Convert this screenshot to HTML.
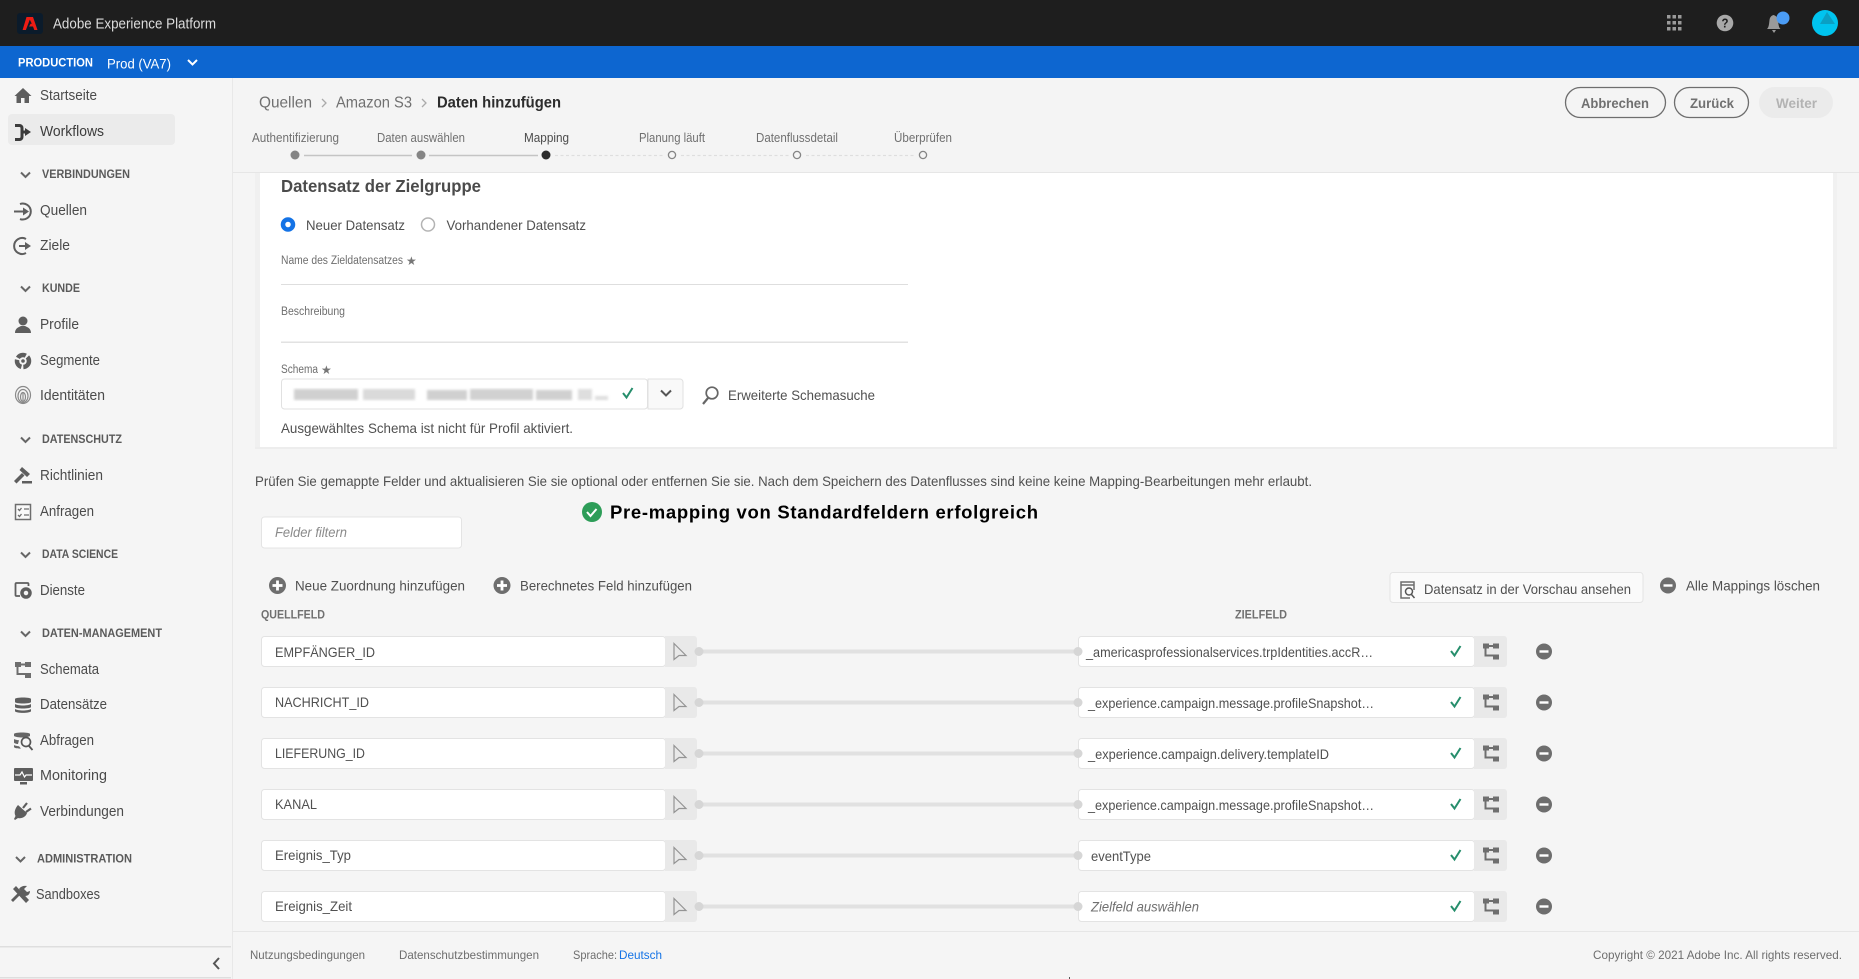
<!DOCTYPE html>
<html lang="de"><head><meta charset="utf-8"><title>Adobe Experience Platform</title>
<style>
html,body{margin:0;padding:0;width:1859px;height:979px;overflow:hidden;background:#f5f5f5}
svg{display:block;filter:blur(.3px)}
text{font-family:"Liberation Sans",sans-serif;dominant-baseline:central;fill:#505050;font-size:14px}
.n{font-size:14.5px;fill:#4b4b4b}
.h{font-size:11.5px;font-weight:bold;fill:#5a5a5a}
.s{font-size:12.5px;fill:#707070}
.l{font-size:11.5px;fill:#6e6e6e}
.f{font-size:12px;fill:#6e6e6e}
.r{font-size:14px;fill:#505050}
.i{fill:#5e5e5e}
.st{fill:none;stroke:#5e5e5e;stroke-width:2}
.chev{fill:none;stroke:#666;stroke-width:2}
</style></head><body>
<svg width="1859" height="979" viewBox="0 0 1859 979" xmlns="http://www.w3.org/2000/svg">
<defs>
<filter id="bl"><feGaussianBlur stdDeviation="1.3"/></filter>
<g id="minus"><ellipse cx="0" cy="0" rx="8" ry="8" fill="#6e6e6e"/><rect x="-4.5" y="-1.2" width="9" height="2.4" fill="#fff"/></g>
<g id="plus"><circle r="8.5" fill="#6e6e6e"/><rect x="-5" y="-1.4" width="10" height="2.8" fill="#fff"/><rect x="-1.4" y="-5" width="2.8" height="10" fill="#fff"/></g>
<g id="tree" fill="#6e6e6e"><rect x="-8" y="-8" width="6" height="5"/><rect x="2" y="-8" width="6" height="5"/><rect x="2" y="3" width="6" height="5"/><path d="M-5.5-3v7H2M-2-5.5h4" fill="none" stroke="#6e6e6e" stroke-width="2"/></g>
<g id="arrow"><path d="M-6-8L6 4-1 4-6 8z" fill="none" stroke="#949494" stroke-width="1.200"/></g>
<path id="chk" d="M-5 0l3.5 4.5L4.5-5" fill="none" stroke="#268e6c" stroke-width="2"/>
<g id="src">
<rect x=".5" y=".5" width="404" height="30" rx="3" fill="#fff" stroke="#e3e3e3"/>
<path d="M404 0h29a3 3 0 0 1 3 3v25a3 3 0 0 1-3 3h-29z" fill="#e9e9e9"/>
<use href="#arrow" x="419" y="15.5"/>
<rect x="437" y="13.5" width="381" height="4" fill="#e1e1e1"/>
<circle cx="438" cy="15.5" r="4.5" fill="#d6d6d6"/>
<rect x="817.500" y=".5" width="396" height="30" rx="3" fill="#fff" stroke="#e3e3e3"/>
<path d="M1213 0h30a3 3 0 0 1 3 3v25a3 3 0 0 1-3 3h-30z" fill="#e9e9e9"/>
<circle cx="817" cy="15.5" r="4.5" fill="#d6d6d6"/>
<use href="#tree" x="1230" y="15.5"/>
<use href="#chk" x="1195" y="15"/>
<use href="#minus" x="1283" y="15.500"/>
</g>
</defs>

<!-- top bars -->
<rect width="1859" height="46" fill="#1e1e1e"/>
<rect y="46" width="1859" height="32" fill="#0d66d0"/>
<rect x="17" y="13" width="26" height="21" rx="3" fill="#0b1b2b"/>
<path d="M26.500 17h6.500L37.500 30H34.300L33 26.500H29L30.600 23.700H31.800L29.800 19.600 25.900 30H22.600z" fill="#ee1c14"/>
<text x="53" y="24.500" textLength="163" lengthAdjust="spacingAndGlyphs" style="font-size:14.500px;fill:#dcdcdc">Adobe Experience Platform</text>
<text x="18" y="63.500" textLength="75" lengthAdjust="spacingAndGlyphs" style="font-size:11.500px;font-weight:bold;fill:#fff">PRODUCTION</text>
<text x="107" y="63.500" textLength="64" lengthAdjust="spacingAndGlyphs" style="font-size:14px;fill:#fff">Prod (VA7)</text>
<path d="M188 60l4.500 4.500 4.500-4.500" fill="none" stroke="#fff" stroke-width="2"/>
<g fill="#9a9a9a"><rect x="1667" y="15" width="3.500" height="3.500"/><rect x="1672.500" y="15" width="3.500" height="3.500"/><rect x="1678" y="15" width="3.500" height="3.500"/><rect x="1667" y="21" width="3.500" height="3.500"/><rect x="1672.500" y="21" width="3.500" height="3.500"/><rect x="1678" y="21" width="3.500" height="3.500"/><rect x="1667" y="27" width="3.500" height="3.500"/><rect x="1672.500" y="27" width="3.500" height="3.500"/><rect x="1678" y="27" width="3.500" height="3.500"/></g>
<ellipse cx="1725" cy="23" rx="8.300" ry="8.300" fill="#a8a8a8"/><text x="1721.500" y="23" textLength="7" lengthAdjust="spacingAndGlyphs" style="font-size:13px;font-weight:bold;fill:#1e1e1e">?</text>
<path d="M1767 29c2-2 2-5 2.500-9 .4-3 2-4.500 4-5 2 .5 4 2 4.500 5 .5 4 .5 7 2.500 9zM1772 30h4l-2 3z" fill="#9a9a9a"/>
<circle cx="1783" cy="18" r="6.500" fill="#4b9cf5"/>
<circle cx="1825" cy="23" r="13" fill="#00c4ef"/><path d="M1827 12l8 12h-15z" fill="#0aa0c4"/>

<!-- sidebar -->
<rect x="232" y="78" width="1" height="901" fill="#e8e8e8"/>
<rect x="8" y="114" width="167" height="31" rx="4" fill="#ebebeb"/>
<rect x="0" y="946" width="231" height="1.500" fill="#dedede"/><rect x="0" y="977" width="231" height="1.500" fill="#dedede"/>
<path d="M219 958l-5 5.500 5 5.500" fill="none" stroke="#555" stroke-width="2"/>
<g transform="translate(0,1)">
<path d="M14.500 95l8.500-8 8.500 8h-2.500v7h-4.500v-5h-3.500v5h-4.500v-7z" class="i"/>
<text class="n" x="40" y="95" textLength="57" lengthAdjust="spacingAndGlyphs">Startseite</text>
<path d="M15 124.500h4.500a2.500 2.500 0 0 1 2.500 2.500v9a2.500 2.500 0 0 1-2.500 2.500H15M22 131h4" fill="none" stroke="#3c3c3c" stroke-width="3"/><path d="M25 127l6 4-6 4z" fill="#3c3c3c"/>
<text class="n" x="40" y="131" textLength="64" lengthAdjust="spacingAndGlyphs" style="fill:#3c3c3c">Workflows</text>
<path class="chev" d="M21 171.500l4.500 4.500 4.500-4.500"/>
<text class="h" x="42" y="174" textLength="88" lengthAdjust="spacingAndGlyphs">VERBINDUNGEN</text>
<path class="st" d="M20 203a8 8 0 1 1 0 15M14 210.500h11"/><path d="M23 206.500l6 4-6 4z" class="i"/>
<text class="n" x="40" y="210" textLength="47" lengthAdjust="spacingAndGlyphs">Quellen</text>
<path class="st" d="M26 238a8 8 0 1 0 0 14M19 245h7"/><path d="M25 241l6 4-6 4z" class="i"/>
<text class="n" x="40" y="245" textLength="30" lengthAdjust="spacingAndGlyphs">Ziele</text>
<path class="chev" d="M21 285.500l4.500 4.500 4.500-4.500"/>
<text class="h" x="42" y="288" textLength="38" lengthAdjust="spacingAndGlyphs">KUNDE</text>
<circle cx="23" cy="320" r="4.500" class="i"/><path d="M15 332c0-5 4-6 6-7h4c2 1 6 2 6 7z" class="i"/>
<text class="n" x="40" y="324" textLength="39" lengthAdjust="spacingAndGlyphs">Profile</text>
<circle cx="23" cy="360" r="6" fill="none" stroke="#5e5e5e" stroke-width="4.500" stroke-dasharray="9 2"/><circle cx="23" cy="360" r="1.800" class="i"/>
<text class="n" x="40" y="360" textLength="60" lengthAdjust="spacingAndGlyphs">Segmente</text>
<g fill="none" stroke="#8a8a8a" stroke-width="1.200"><ellipse cx="23" cy="394" rx="7.500" ry="8.500"/><ellipse cx="23" cy="395" rx="5" ry="6.500"/><ellipse cx="23" cy="396" rx="2.500" ry="4.500"/><path d="M23 392v8"/></g>
<text class="n" x="40" y="395" textLength="65" lengthAdjust="spacingAndGlyphs">Identitäten</text>
<path class="chev" d="M21 436.500l4.500 4.500 4.500-4.500"/>
<text class="h" x="42" y="439" textLength="80" lengthAdjust="spacingAndGlyphs">DATENSCHUTZ</text>
<path d="M22 466l8 7-3 3-7.500-7zM22 472l2.500 2.500-8 8-2.500-2.500zM22 480h10v2.500H22z" class="i"/>
<text class="n" x="40" y="475" textLength="63" lengthAdjust="spacingAndGlyphs">Richtlinien</text>
<rect x="15.500" y="503.500" width="15" height="15" fill="#fff" fill-opacity=".4" stroke="#6e6e6e" stroke-width="1.500"/><path d="M18 508l1.500 1.500 2-2.500M24 508h5M18 514l1.500 1.500 2-2.500M24 514h5" fill="none" stroke="#6e6e6e" stroke-width="1.300"/>
<text class="n" x="40" y="511" textLength="54" lengthAdjust="spacingAndGlyphs">Anfragen</text>
<path class="chev" d="M21 551.500l4.500 4.500 4.500-4.500"/>
<text class="h" x="42" y="554" textLength="76" lengthAdjust="spacingAndGlyphs">DATA SCIENCE</text>
<path d="M20 595h-3.500a1 1 0 0 1-1-1v-11a1 1 0 0 1 1-1h11a1 1 0 0 1 1 1v2" fill="none" stroke="#5e5e5e" stroke-width="1.800"/><circle cx="26" cy="592" r="4" fill="none" stroke="#5e5e5e" stroke-width="3.500"/>
<text class="n" x="40" y="590" textLength="45" lengthAdjust="spacingAndGlyphs">Dienste</text>
<path class="chev" d="M21 630.500l4.500 4.500 4.500-4.500"/>
<text class="h" x="42" y="633" textLength="120" lengthAdjust="spacingAndGlyphs">DATEN-MANAGEMENT</text>
<use href="#tree" x="23" y="669"/>
<text class="n" x="40" y="669" textLength="59" lengthAdjust="spacingAndGlyphs">Schemata</text>
<path d="M15 698c0-2 16-2 16 0v3c0 2-16 2-16 0zM15 703c3 2 13 2 16 0v3c0 2-16 2-16 0zM15 708c3 2 13 2 16 0v2c0 2.500-16 2.500-16 0z" fill="#5e5e5e"/>
<text class="n" x="40" y="704" textLength="67" lengthAdjust="spacingAndGlyphs">Datensätze</text>
<path d="M14 733c0-2 16-2 16 0v2c-3 2-13 2-16 0zM14 738c1 .7 3 1 5 1.300l-1 3.700c-2 0-4-1-4-1.500zM14 744c1 .7 3 1 5 1.300l2 2.200c-3 .3-7-.5-7-1.500z" fill="#666"/>
<circle cx="26" cy="741" r="4.500" fill="none" stroke="#555" stroke-width="1.700"/><path d="M29 745l3.500 4" stroke="#555" stroke-width="1.800"/>
<text class="n" x="40" y="740" textLength="54" lengthAdjust="spacingAndGlyphs">Abfragen</text>
<rect x="14" y="767" width="19" height="13" rx="1" fill="#5e5e5e"/><path d="M15 774h5l2-3 2.500 5 1.500-2h6" fill="none" stroke="#fff" stroke-width="1.200"/><rect x="20" y="781" width="7" height="2.500" fill="#5e5e5e"/>
<text class="n" x="40" y="775" textLength="67" lengthAdjust="spacingAndGlyphs">Monitoring</text>
<path d="M18 804l9 8c-1 4-6 6-9 5l-3 2-1-1 1.500-3c-2-4 0-8 2.500-11z" fill="#5e5e5e"/><path d="M23 807l4-5M26 811l5-3.500" stroke="#5e5e5e" stroke-width="2.200"/>
<text class="n" x="40" y="811" textLength="84" lengthAdjust="spacingAndGlyphs">Verbindungen</text>
<path class="chev" d="M16 856l4.500 4.500 4.500-4.500"/>
<text class="h" x="37" y="858.500" textLength="95" lengthAdjust="spacingAndGlyphs">ADMINISTRATION</text>
<path d="M13 888l3-3 13 14-3 3zM11 899l10-10 2 2-10 10zM19 888c2-3 5-3.500 8-3l-3 3 3 3 3-1c0 3-2 5-5 5z" fill="#5e5e5e"/>
<text class="n" x="36" y="894" textLength="64" lengthAdjust="spacingAndGlyphs">Sandboxes</text>
</g>

<!-- header -->
<rect x="233" y="78" width="1626" height="94" fill="#f4f4f4"/>
<rect x="233" y="172" width="1626" height="1" fill="#e6e6e6"/>
<text x="259" y="103" textLength="53" lengthAdjust="spacingAndGlyphs" style="font-size:16px;fill:#707070">Quellen</text>
<path d="M422 99l4 4-4 4M322 99l4 4-4 4" fill="none" stroke="#aaa" stroke-width="1.300"/>
<text x="336" y="103" textLength="76" lengthAdjust="spacingAndGlyphs" style="font-size:16px;fill:#707070">Amazon S3</text>
<text x="437" y="103" textLength="124" lengthAdjust="spacingAndGlyphs" style="font-size:16px;font-weight:bold;fill:#2c2c2c">Daten hinzufügen</text>
<text class="s" x="252" y="138" textLength="87" lengthAdjust="spacingAndGlyphs">Authentifizierung</text>
<text class="s" x="377" y="138" textLength="88" lengthAdjust="spacingAndGlyphs">Daten auswählen</text>
<text class="s" x="524" y="138" textLength="45" lengthAdjust="spacingAndGlyphs" style="fill:#4b4b4b">Mapping</text>
<text class="s" x="639" y="138" textLength="66" lengthAdjust="spacingAndGlyphs">Planung läuft</text>
<text class="s" x="756" y="138" textLength="82" lengthAdjust="spacingAndGlyphs">Datenflussdetail</text>
<text class="s" x="894" y="138" textLength="58" lengthAdjust="spacingAndGlyphs">Überprüfen</text>
<path d="M304 155.500h108M429 155.500h109" stroke="#c4c4c4" stroke-width="1.500"/>
<path d="M555 155.500h108M681 155.500h108M806 155.500h108" stroke="#dedede" stroke-width="1.200" stroke-dasharray="3 2.500"/>
<circle cx="295" cy="155" r="4.500" fill="#858585"/><circle cx="421" cy="155" r="4.500" fill="#858585"/><circle cx="546" cy="155" r="4.500" fill="#2c2c2c"/>
<g fill="#f4f4f4" stroke="#858585" stroke-width="1.300"><circle cx="672" cy="155" r="3.600"/><circle cx="797" cy="155" r="3.600"/><circle cx="923" cy="155" r="3.600"/></g>
<rect x="1565.500" y="87.500" width="100" height="30" rx="15" fill="none" stroke="#6e6e6e" stroke-width="1.300"/>
<text x="1581" y="103" textLength="68" lengthAdjust="spacingAndGlyphs" style="font-size:14px;font-weight:bold;fill:#707070">Abbrechen</text>
<rect x="1674.500" y="87.500" width="74" height="30" rx="15" fill="none" stroke="#6e6e6e" stroke-width="1.300"/>
<text x="1690" y="103" textLength="44" lengthAdjust="spacingAndGlyphs" style="font-size:14px;font-weight:bold;fill:#707070">Zurück</text>
<rect x="1759" y="87" width="74" height="31" rx="15.500" fill="#ebebeb"/>
<text x="1776" y="103" textLength="41" lengthAdjust="spacingAndGlyphs" style="font-size:14px;font-weight:bold;fill:#b3b3b3">Weiter</text>

<!-- card -->
<rect x="255" y="173" width="5" height="275" fill="#f0f0f0"/><rect x="1833" y="173" width="4" height="275" fill="#f1f1f1"/>
<rect x="255" y="447" width="1582" height="2" fill="#ededed"/>
<rect x="260" y="173" width="1573" height="274" fill="#fff"/>
<text x="281" y="186" textLength="200" lengthAdjust="spacingAndGlyphs" style="font-size:17.500px;font-weight:bold;fill:#4b4b4b">Datensatz der Zielgruppe</text>
<circle cx="288" cy="224.500" r="5" fill="#fff" stroke="#1473e6" stroke-width="4.500"/>
<text x="306" y="225" textLength="99" lengthAdjust="spacingAndGlyphs" class="r">Neuer Datensatz</text>
<circle cx="428" cy="224.500" r="6.500" fill="#fff" stroke="#b3b3b3" stroke-width="1.500"/>
<text x="446.500" y="225" textLength="139.500" lengthAdjust="spacingAndGlyphs" class="r">Vorhandener Datensatz</text>
<text class="l" x="281" y="261" textLength="122" lengthAdjust="spacingAndGlyphs">Name des Zieldatensatzes</text>
<text x="406" y="261" style="font-size:12px;fill:#777">★</text>
<rect x="281" y="284" width="627" height="1" fill="#dedede"/>
<text class="l" x="281" y="312" textLength="64" lengthAdjust="spacingAndGlyphs">Beschreibung</text>
<rect x="281" y="341.500" width="627" height="1.500" fill="#e2e2e2"/>
<text class="l" x="281" y="370" textLength="37" lengthAdjust="spacingAndGlyphs">Schema</text>
<text x="321" y="370" style="font-size:12px;fill:#777">★</text>
<rect x="281.500" y="379" width="366" height="30" rx="3" fill="#fff" stroke="#e1e1e1"/>
<path d="M648 379h32a3 3 0 0 1 3 3v24a3 3 0 0 1-3 3h-32z" fill="#f9f9f9" stroke="#e1e1e1"/>
<g filter="url(#bl)"><rect x="294" y="389" width="64" height="11" fill="#b0b0b0" opacity=".6"/><rect x="363" y="389" width="52" height="11" fill="#bbb" opacity=".55"/><rect x="427" y="390" width="40" height="10" fill="#aaa" opacity=".55"/><rect x="470" y="389" width="63" height="11" fill="#b3b3b3" opacity=".6"/><rect x="536" y="390" width="36" height="10" fill="#aaa" opacity=".55"/><rect x="578" y="389" width="14" height="11" fill="#c8c8c8" opacity=".6"/><rect x="595" y="396" width="13" height="4" fill="#ddd"/></g>
<use href="#chk" x="628" y="393"/>
<path d="M661 390.500l5 5 5-5" fill="none" stroke="#555" stroke-width="2"/>
<circle cx="712" cy="393" r="5.800" fill="none" stroke="#666" stroke-width="1.700"/><path d="M708 398l-5 6" stroke="#666" stroke-width="2.200"/>
<text class="r" x="728" y="395" textLength="147" lengthAdjust="spacingAndGlyphs">Erweiterte Schemasuche</text>
<text class="r" x="281" y="428" textLength="292" lengthAdjust="spacingAndGlyphs">Ausgewähltes Schema ist nicht für Profil aktiviert.</text>

<!-- below card -->
<text class="r" x="255" y="481" textLength="1057" lengthAdjust="spacingAndGlyphs">Prüfen Sie gemappte Felder und aktualisieren Sie sie optional oder entfernen Sie sie. Nach dem Speichern des Datenflusses sind keine keine Mapping-Bearbeitungen mehr erlaubt.</text>
<circle cx="592" cy="512" r="10" fill="#2d9d58"/><path d="M587 512l3.500 4 6-7" fill="none" stroke="#fff" stroke-width="2"/>
<text x="610" y="512" textLength="428" lengthAdjust="spacing" style="font-size:18.500px;font-weight:bold;fill:#000">Pre-mapping von Standardfeldern erfolgreich</text>
<rect x="261.500" y="517" width="200" height="31" rx="3" fill="#fff" stroke="#e4e4e4"/>
<text x="275" y="532" textLength="72" lengthAdjust="spacingAndGlyphs" style="font-size:14px;font-style:italic;fill:#8a8a8a">Felder filtern</text>
<use href="#plus" x="277.500" y="585.500"/>
<text class="r" x="295" y="585.500" textLength="170" lengthAdjust="spacingAndGlyphs">Neue Zuordnung hinzufügen</text>
<use href="#plus" x="502" y="585.500"/>
<text class="r" x="520" y="585.500" textLength="172" lengthAdjust="spacingAndGlyphs">Berechnetes Feld hinzufügen</text>
<rect x="1390" y="572.500" width="253" height="30" rx="3" fill="#fafafa" stroke="#e4e4e4"/>
<path d="M1410 598h-9v-16h13v8M1401 585h13" fill="none" stroke="#6e6e6e" stroke-width="1.500"/><circle cx="1409" cy="591.500" r="3.500" fill="none" stroke="#555" stroke-width="1.500"/><path d="M1411.500 594.500l3 3.500" stroke="#555" stroke-width="1.500"/>
<text class="r" x="1424" y="589" textLength="207" lengthAdjust="spacingAndGlyphs">Datensatz in der Vorschau ansehen</text>
<use href="#minus" x="1668" y="585.500"/>
<text class="r" x="1686" y="585.500" textLength="134" lengthAdjust="spacingAndGlyphs">Alle Mappings löschen</text>
<text class="h" x="261" y="615.500" textLength="64" lengthAdjust="spacingAndGlyphs" style="fill:#707070">QUELLFELD</text>
<text class="h" x="1235" y="615.500" textLength="52" lengthAdjust="spacingAndGlyphs" style="fill:#707070">ZIELFELD</text>

<!-- rows -->
<use href="#src" x="261" y="636"/>
<use href="#src" x="261" y="687"/>
<use href="#src" x="261" y="738"/>
<use href="#src" x="261" y="789"/>
<use href="#src" x="261" y="840"/>
<use href="#src" x="261" y="891"/>
<text class="r" x="275" y="652" textLength="100" lengthAdjust="spacingAndGlyphs">EMPFÄNGER_ID</text>
<text class="r" x="275" y="702" textLength="94" lengthAdjust="spacingAndGlyphs">NACHRICHT_ID</text>
<text class="r" x="275" y="753" textLength="90" lengthAdjust="spacingAndGlyphs">LIEFERUNG_ID</text>
<text class="r" x="275" y="804" textLength="42" lengthAdjust="spacingAndGlyphs">KANAL</text>
<text class="r" x="275" y="855" textLength="76" lengthAdjust="spacingAndGlyphs">Ereignis_Typ</text>
<text class="r" x="275" y="906" textLength="77" lengthAdjust="spacingAndGlyphs">Ereignis_Zeit</text>
<text class="r" x="1086" y="652" textLength="287" lengthAdjust="spacingAndGlyphs">_americasprofessionalservices.trpIdentities.accR…</text>
<text class="r" x="1088" y="703" textLength="286" lengthAdjust="spacingAndGlyphs">_experience.campaign.message.profileSnapshot…</text>
<text class="r" x="1088" y="754" textLength="241" lengthAdjust="spacingAndGlyphs">_experience.campaign.delivery.templateID</text>
<text class="r" x="1088" y="805" textLength="286" lengthAdjust="spacingAndGlyphs">_experience.campaign.message.profileSnapshot…</text>
<text class="r" x="1091" y="856" textLength="60" lengthAdjust="spacingAndGlyphs">eventType</text>
<text x="1091" y="906.500" textLength="108" lengthAdjust="spacingAndGlyphs" style="font-size:14px;font-style:italic;fill:#707070">Zielfeld auswählen</text>

<!-- footer -->
<rect x="233" y="931" width="1626" height="48" fill="#f5f5f5"/>
<rect x="233" y="931" width="1626" height="1" fill="#e6e6e6"/>
<text class="f" x="250" y="955" textLength="115" lengthAdjust="spacingAndGlyphs">Nutzungsbedingungen</text>
<text class="f" x="399" y="955" textLength="140" lengthAdjust="spacingAndGlyphs">Datenschutzbestimmungen</text>
<text class="f" x="573" y="955" textLength="44" lengthAdjust="spacingAndGlyphs">Sprache:</text>
<text class="f" x="619" y="955" textLength="43" lengthAdjust="spacingAndGlyphs" style="fill:#1473e6">Deutsch</text>
<text class="f" x="1593" y="955" textLength="249" lengthAdjust="spacingAndGlyphs">Copyright © 2021 Adobe Inc. All rights reserved.</text>
<rect x="1069" y="977" width="1" height="2" fill="#555"/>
</svg>
</body></html>
